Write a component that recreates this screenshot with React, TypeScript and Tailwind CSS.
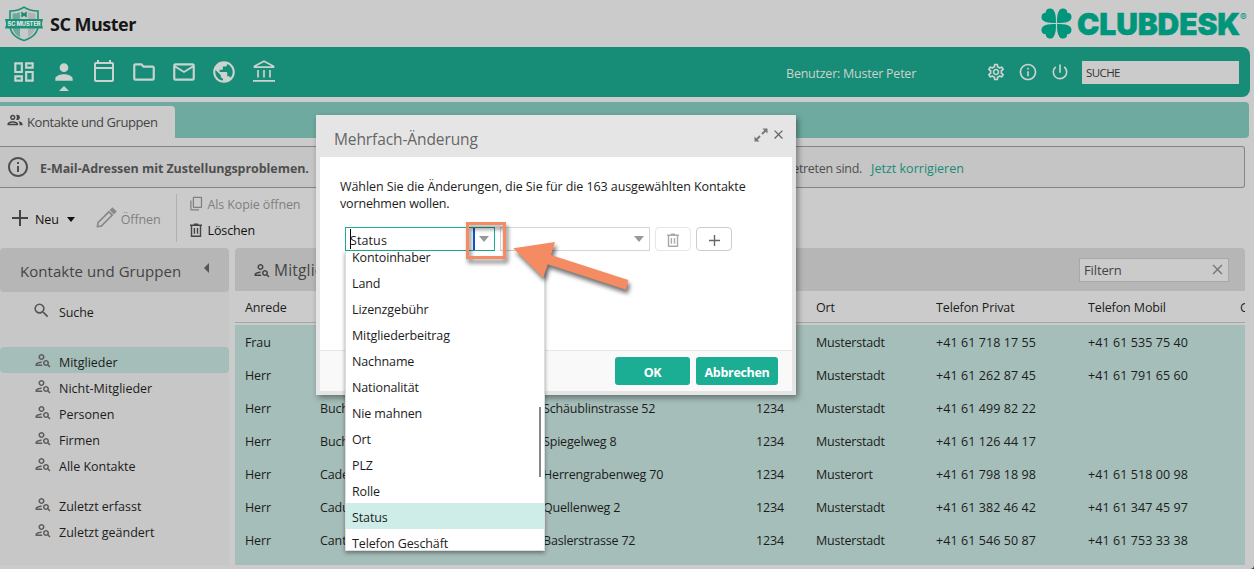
import {
  MdClose,
  MdContentCopy,
  MdMailOutline,
  MdOutlineCalendarToday,
  MdOutlineDashboard,
  MdOutlineFolder,
  MdOutlineGroup,
  MdOutlineInfo,
  MdOutlinePersonSearch,
  MdOutlineSettings,
  MdPerson,
  MdPowerSettingsNew,
  MdPublic,
  MdSearch,
} from 'react-icons/md';

const CONTACTS = [
  { salutation: 'Frau', name: 'Brun', street: 'Hauptstrasse 12', zip: '1234', city: 'Musterstadt', phone: '+41 61 718 17 55', mobile: '+41 61 535 75 40' },
  { salutation: 'Herr', name: 'Brun', street: 'Hauptstrasse 12', zip: '1234', city: 'Musterstadt', phone: '+41 61 262 87 45', mobile: '+41 61 791 65 60' },
  { salutation: 'Herr', name: 'Buch', street: 'Schäublinstrasse 52', zip: '1234', city: 'Musterstadt', phone: '+41 61 499 82 22', mobile: '' },
  { salutation: 'Herr', name: 'Buch', street: 'Spiegelweg 8', zip: '1234', city: 'Musterstadt', phone: '+41 61 126 44 17', mobile: '' },
  { salutation: 'Herr', name: 'Cade', street: 'Herrengrabenweg 70', zip: '1234', city: 'Musterort', phone: '+41 61 798 18 98', mobile: '+41 61 518 00 98' },
  { salutation: 'Herr', name: 'Cadu', street: 'Quellenweg 2', zip: '1234', city: 'Musterstadt', phone: '+41 61 382 46 42', mobile: '+41 61 347 45 97' },
  { salutation: 'Herr', name: 'Canti', street: 'Baslerstrasse 72', zip: '1234', city: 'Musterstadt', phone: '+41 61 546 50 87', mobile: '+41 61 753 33 38' },
];

const GROUPS = ['Mitglieder', 'Nicht-Mitglieder', 'Personen', 'Firmen', 'Alle Kontakte'];
const RECENT = ['Zuletzt erfasst', 'Zuletzt geändert'];

const FIELDS = [
  'Kontoinhaber',
  'Land',
  'Lizenzgebühr',
  'Mitgliederbeitrag',
  'Nachname',
  'Nationalität',
  'Nie mahnen',
  'Ort',
  'PLZ',
  'Rolle',
  'Status',
  'Telefon Geschäft',
];

const COLUMNS = 'grid grid-cols-[75px_223px_213px_60px_120px_152px_152px_1fr] pl-2.5';

// Club crest
const Crest = () => (
  <svg width="38" height="36" viewBox="0 0 38 36" className="shrink-0">
    <path d="M19 1.2C15 4 10 5 5 5v14c0 8 6 13 14 15.500C27 32 33 27 33 19V5C28 5 23 4 19 1.200Z" fill="#c8cac9" stroke="#1d9178" strokeWidth="1.600" />
    <path d="M7.500 7.500c2.500 0 5-.4 7.500-1.300v25C10.500 29 7.500 25 7.500 19Z" fill="#6fa99d" />
    <path d="M23 6.200c2.500.9 5 1.300 7.500 1.300V19c0 6-3 10-7.500 12.200Z" fill="#b1b3b2" />
    <path d="M16.500 5.500l2.500 1.800 2.500-1.800.5 2.500-1 .5 1 .5-.5 2.500-2.500-1.800-2.500 1.800L16 9l1-.5-1-.5Z" fill="#1d8a72" />
    <path d="M0 13h38l-1.200 5 1.200 4.500H0L1.200 18Z" fill="#1d9178" />
    <text x="19" y="19.800" textAnchor="middle" textLength="33" lengthAdjust="spacingAndGlyphs" fontSize="5.500" fontWeight="800" fontFamily="Inter, sans-serif" fill="#dfe5e3">
      SC MUSTER
    </text>
  </svg>
);

const ClubdeskLogo = () => (
  <div className="flex items-center">
    <svg width="31" height="31" viewBox="0 0 31 31" fill="#00967b">
      <path id="leaf" d="M14.900 14.900C10 15.200 5 14.700 2 12.500 0 11 0 7.500 1.800 5.800 2.800 4.800 4 4.600 4.900 4.900 4.600 3.600 5 2.400 6 1.500 7.600 0 11 0 12.500 2 14.700 5 15.200 10 14.900 14.900Z" />
      <use href="#leaf" transform="rotate(90 15.500 15.500)" />
      <use href="#leaf" transform="rotate(180 15.500 15.500)" />
      <use href="#leaf" transform="rotate(270 15.500 15.500)" />
    </svg>
    <svg width="167" height="31" viewBox="0 0 167 31" className="overflow-visible" fill="#00967b" stroke="#00967b" fontFamily="Inter, sans-serif">
      <text x="5" y="26.500" fontSize="30" fontWeight="900" strokeWidth=".5" textLength="163" lengthAdjust="spacingAndGlyphs">
        CLUBDESK
      </text>
    </svg>
    <span className="ml-px w-[7px] self-start font-[Inter] text-[10px] leading-[18px] tracking-normal text-[#00967b]">®</span>
  </div>
);

const BankIcon = () => (
  <svg width="24" height="24" viewBox="0 0 24 24" fill="none" stroke="currentColor" strokeWidth="1.700">
    <path d="M2.500 8.200v-.9L12 2.300l9.500 5v.9ZM6 11v7.500M12 11v7.500M18 11v7.500M1 21.800h22" />
  </svg>
);

const TrashIcon = ({ size = 14 }: { size?: number }) => (
  <svg width={size} height={size} viewBox="0 0 14 14" fill="none" stroke="currentColor" strokeWidth="1.400">
    <path d="M1 2.300h12M4.800 1.200h4.400M2.500 2.500v10.700h9V2.500M5.400 5v5.800M8.500 5v5.800" />
  </svg>
);

const PlusIcon = ({ size }: { size: number }) => (
  <svg width={size} height={size} viewBox="0 0 16 16" stroke="currentColor" strokeWidth="2">
    <path d="M8 0v16M0 8h16" />
  </svg>
);

const Caret = () => (
  <span className="h-0 w-0 border-x-[5px] border-t-[6px] border-x-transparent border-t-[#999]" />
);

const GroupRow = ({ label, active = false }: { label: string; active?: boolean }) => (
  <li className={`flex h-[26px] items-center rounded pl-[34px] ${active ? 'bg-[#a5beb9]' : ''}`}>
    <MdOutlinePersonSearch size={18} className="-mr-px shrink-0 text-[#5c5c5c]" />
    <span className="ml-2 pt-1.5 tracking-[-0.02px]">{label}</span>
  </li>
);

const Header = () => (
  <header className="flex h-[47px] items-center justify-between pl-[5px] pr-[7px]">
    <div className="flex items-center gap-[7px]">
      <Crest />
      <span className="pt-0.5 text-[18px] font-bold tracking-[-0.5px] text-[#161616]">SC Muster</span>
    </div>
    <ClubdeskLogo />
  </header>
);

const NavBar = () => (
  <nav className="mr-1 flex h-[50px] items-center rounded-r-lg bg-[#178c76] pl-3 pr-[11px] text-[#cbd2d0]">
    <div className="flex flex-1 gap-4">
      <MdOutlineDashboard size={26} className="-mx-px" />
      <div className="relative -mx-px">
        <MdPerson size={26} />
        <span className="absolute left-2 top-[27px] border-x-[5px] border-b-[5px] border-x-transparent border-b-[#cbd2d0]" />
      </div>
      <MdOutlineCalendarToday size={24} />
      <MdOutlineFolder size={26} className="-mx-px" />
      <MdMailOutline size={26} className="-mx-px" />
      <MdPublic size={26} className="-mx-px" />
      <BankIcon />
    </div>
    <span className="mr-[70px] pt-[5px] text-[12.500px] tracking-[-0.24px]">Benutzer: Muster Peter</span>
    <div className="mr-3 flex gap-3">
      <MdOutlineSettings size={20} />
      <MdOutlineInfo size={20} />
      <MdPowerSettingsNew size={20} />
    </div>
    <div className="flex h-[23px] w-[157px] items-center bg-[#cbcbcb] px-1 pt-0.5 text-[11.500px] tracking-[-0.6px] text-[#333]">SUCHE</div>
  </nav>
);

const TabBar = () => (
  <div className="mr-[5px] mt-[5px] flex h-9 items-end rounded-r bg-[#6eaa9f]">
    <div className="flex h-8 w-[175px] items-center rounded-tr bg-[#cbcbcb] pl-1.5 text-[#444]">
      <MdOutlineGroup size={18} className="-mt-1" />
      <span className="ml-[3px] pt-0.5 text-[13px] tracking-[-0.42px]">Kontakte und Gruppen</span>
    </div>
  </div>
);

const Notice = () => (
  <div className="mr-[9px] mt-2 flex h-[42px] items-center rounded-r-[3px] border border-l-0 border-[#858585] bg-[#c5c5c5] text-[#4f4f4f]">
    <MdOutlineInfo size={24} className="ml-1.5" />
    <span className="ml-2.5 pt-1 font-bold tracking-[-0.06px]">E-Mail-Adressen mit Zustellungsproblemen.</span>
    <span className="flex flex-1 justify-end overflow-hidden whitespace-nowrap pt-1 tracking-[-0.3px]">aufgetreten sind.</span>
    <a className="ml-[9px] w-[373px] pt-1 tracking-[0.02px] text-[#178c76]">Jetzt korrigieren</a>
  </div>
);

const Toolbar = () => (
  <div className="flex h-[60px] items-center pl-3">
    <span className="text-[#444]"><PlusIcon size={16} /></span>
    <span className="ml-[7px] pt-1 text-[#111]">Neu</span>
    <span className="ml-2 mt-0.5 border-x-[4px] border-t-[5px] border-x-transparent border-t-[#111]" />
    <svg width="21" height="21" viewBox="0 0 22 22" className="-mt-0.5 ml-[21px]" fill="none" stroke="#8a8a8a" strokeWidth="1.800">
      <path d="M1.500 20.500l.6-4L13.500 5l3.500 3.500L5.500 20Z" />
      <path d="M15.500 3.200l1.700-1.700 3.300 3.300-1.700 1.700Z" fill="#8a8a8a" />
    </svg>
    <span className="ml-1 pt-1 text-[#808080]">Öffnen</span>
    <div className="ml-[15px] flex h-12 flex-col justify-center border-l border-[#b0b0b0] pl-3">
      <div className="-mt-px flex h-[26px] items-center gap-1 text-[#808080]">
        <MdContentCopy size={15} className="-mt-1 -scale-x-100 rotate-180" />
        <span>Als Kopie öffnen</span>
      </div>
      <div className="flex h-[26px] items-center gap-[5px] text-[#111]">
        <span className="text-[#444]"><TrashIcon /></span>
        <span className="pt-[3px]">Löschen</span>
      </div>
    </div>
  </div>
);

const Sidebar = () => (
  <aside className="w-[229px] rounded-t bg-[#c7c7c7]">
    <div className="flex h-11 items-center justify-between rounded bg-[#b6b6b6] pl-5 pr-5 text-[#444]">
      <span className="pt-0.5 text-[15px] tracking-[0.04px]">Kontakte und Gruppen</span>
      <span className="-mt-1 border-y-[5px] border-r-[5px] border-y-transparent border-r-[#555]" />
    </div>
    <div className="mt-[7px] flex h-[26px] items-center pl-8">
      <MdSearch size={19} className="-mt-1 text-[#555]" />
      <span className="ml-2 pt-0.5">Suche</span>
    </div>
    <ul className="mt-[22px]">
      {GROUPS.map((label, i) => (
        <GroupRow key={label} label={label} active={i === 0} />
      ))}
    </ul>
    <ul className="mt-3.5">
      {RECENT.map((label) => (
        <GroupRow key={label} label={label} />
      ))}
    </ul>
  </aside>
);

const ContactTable = () => (
  <section className="flex w-[1010px] flex-col overflow-hidden whitespace-nowrap rounded-t bg-[#cbcbcb]">
    <div className="flex h-[43px] shrink-0 items-center justify-between bg-[#b6b6b6] pl-[18px] pr-4 text-[#444]">
      <div className="flex items-center">
        <MdOutlinePersonSearch size={18} />
        <span className="ml-[3px] pt-0.5 text-[15.500px] tracking-[0.2px]">Mitglieder</span>
      </div>
      <div className="flex h-6 w-[150px] items-center justify-between border border-[#a8a8a8] bg-[#cbcbcb] pl-1 pr-0.5">
        <span className="pt-[3px] text-[13px]">Filtern</span>
        <MdClose size={17} className="text-[#777]" />
      </div>
    </div>
    <div className={`${COLUMNS} h-8 shrink-0 items-center border-b border-[#a5a5a5] pt-[3px]`}>
      <span>Anrede</span>
      <span>Nach</span>
      <span>Strasse</span>
      <span>PLZ</span>
      <span>Ort</span>
      <span>Telefon Privat</span>
      <span>Telefon Mobil</span>
      <span>G</span>
    </div>
    <div className="mt-0.5 flex-1 bg-[#a5beb9]">
      {CONTACTS.map((contact) => (
        <div key={contact.phone} className={`${COLUMNS} h-[33px] items-center pt-[3px]`}>
          <span>{contact.salutation}</span>
          <span>{contact.name}</span>
          <span className="tracking-[-0.18px]">{contact.street}</span>
          <span>{contact.zip}</span>
          <span className="tracking-[-0.2px]">{contact.city}</span>
          <span className="tracking-[0.08px]">{contact.phone}</span>
          <span className="tracking-[0.08px]">{contact.mobile}</span>
        </div>
      ))}
    </div>
  </section>
);

// Open field list, floats over the dialog and the table behind it
const FieldList = () => (
  <div className="absolute -left-px top-[23px] h-[300px] w-[200px] overflow-hidden border border-t-0 border-[#ddd] bg-white shadow-[0_2px_4px_rgba(0,0,0,0.4)]">
    <ul className="-mt-2">
      {FIELDS.map((field) => (
        <li key={field} className={`h-[26px] pl-1.5 leading-[30px] ${field === 'Status' ? 'bg-[#cfede8]' : ''}`}>
          {field}
        </li>
      ))}
    </ul>
    <span className="absolute right-[3px] top-[156px] h-[70px] w-0.5 bg-[#888]" />
  </div>
);

// Orange frame and arrow pointing at the dropdown trigger
const Callout = () => (
  <svg width="190" height="90" viewBox="0 0 190 90" className="pointer-events-none absolute left-[135px] top-[100px] z-20 drop-shadow-[2px_4px_2px_rgba(0,0,0,0.55)]" fill="#f58b62">
    <rect x="12.500" y="8.500" width="37" height="34" fill="none" stroke="#f58b62" strokeWidth="3" />
    <path d="M58.300 33.300L100 27l-4 13L173.300 65 171 74.700 92.700 49.300 88.300 62.700Z" />
  </svg>
);

const Dialog = () => (
  <div className="absolute left-[316px] top-[115px] flex h-[280px] w-[480px] flex-col border-4 border-t-0 border-[#e5e5e5] bg-white shadow-[2px_3px_6px_rgba(0,0,0,0.4)]">
    <div className="flex h-[42px] shrink-0 items-center bg-[#e5e5e5] pl-3.5 pr-1.5 text-[#666]">
      <h2 className="flex-1 pt-[7px] text-[15.500px] tracking-[-0.1px]">Mehrfach-Änderung</h2>
      <svg width="14" height="14" viewBox="0 0 14 14" className="-mt-[3px] mr-[3px]" fill="#777">
        <path d="M8.500 0.500h5v5ZM0.500 8.500v5h5Z" />
        <path d="M12 2L8 6M6 8l-4 4" stroke="#777" strokeWidth="1.800" />
      </svg>
      <MdClose size={15} className="-mt-[3px]" />
    </div>
    <div className="flex-1 pl-5 pt-[21px]">
      <p className="leading-[17px] tracking-[-0.08px]">
        Wählen Sie die Änderungen, die Sie für die 163 ausgewählten Kontakte
        <br />
        <span className="tracking-[-0.16px]">vornehmen wollen.</span>
      </p>
      <div className="ml-[5px] mt-[15px] flex gap-[5px]">
        <div className="relative flex h-6 w-[150px] items-center border border-[#1aad95] bg-white">
          <span className="ml-1 h-5 w-px bg-black" />
          <span className="-ml-px flex-1 pt-1 tracking-[0.1px]">Status</span>
          <span className="flex h-full w-[21px] items-center justify-center border-l-2 border-[#0a5bd8] pr-0.5">
            <Caret />
          </span>
          <FieldList />
        </div>
        <div className="flex h-6 w-[150px] items-center justify-end border border-[#d5d5d5] pr-[5px]">
          <Caret />
        </div>
        <button className="flex h-6 w-9 items-center justify-center rounded border border-[#e6e6e6] pt-0.5 text-[#aaa]">
          <TrashIcon />
        </button>
        <button className="flex h-6 w-9 items-center justify-center rounded border border-[#ccc] pt-0.5 text-[#666]">
          <PlusIcon size={11} />
        </button>
      </div>
    </div>
    <div className="flex h-[41px] shrink-0 items-center justify-end gap-1.5 border-t border-[#e6e6e6] bg-[#f9f9f9] pr-3.5 font-bold tracking-[-0.3px] text-white">
      <button className="h-7 w-[75px] rounded-[3px] bg-[#1cae95] pt-1">OK</button>
      <button className="h-7 w-[82px] rounded-[3px] bg-[#1cae95] pt-1">Abbrechen</button>
    </div>
    <Callout />
  </div>
);

export default function App() {
  return (
    <div className="h-[569px] w-[1254px] bg-[#333]">
      <div className="relative h-full overflow-hidden rounded-br-[4px] bg-[#cbcbcb] font-['Open_Sans',sans-serif] text-[12.500px] tracking-[-0.12px] text-[#1c1c1c]">
        <Header />
        <NavBar />
        <TabBar />
        <Notice />
        <Toolbar />
        <main className="flex h-[317px] gap-1.5">
          <Sidebar />
          <ContactTable />
        </main>
        <Dialog />
      </div>
    </div>
  );
}
